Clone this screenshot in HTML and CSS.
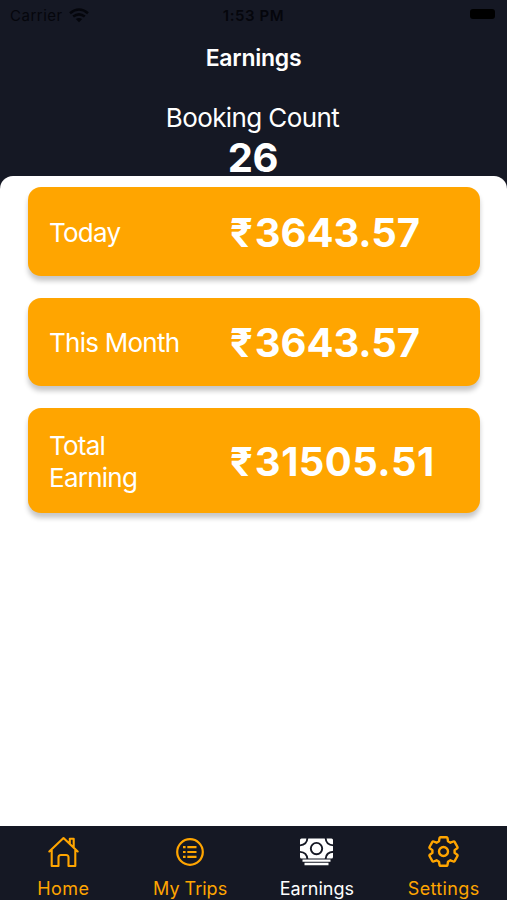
FILE: index.html
```html
<!DOCTYPE html>
<html lang="en">
<head>
<meta charset="utf-8">
<title>Earnings</title>
<link rel="stylesheet" href="styles.css">
</head>
<body>
<div class="status">
  <div class="carrier"><span>Carrier</span>
    <svg width="20" height="15" viewBox="0 0 20 15" fill="none" stroke="currentColor" stroke-width="2.6"><path d="M1 5.2Q10-2.2 19 5.2M4.2 8.6Q10 4 15.8 8.6"/><path d="M10 14.2 6.8 11Q10 8.8 13.2 11Z" fill="currentColor" stroke="none"/></svg>
  </div>
  <span class="time">1:53 PM</span>
  <div class="battery"><i></i></div>
</div>
<h1 class="title">Earnings</h1>
<div class="count-label"><span>Booking Count</span></div>
<div class="count">26</div>
<main class="sheet">
  <section class="card"><span class="label">Today</span><span class="amount">₹<b>3643.57</b></span></section>
  <section class="card"><span class="label">This Month</span><span class="amount">₹<b>3643.57</b></span></section>
  <section class="card tall"><span class="label">Total<br>Earning</span><span class="amount">₹<b>31505.51</b></span></section>
</main>
<nav class="tabs">
  <a class="tab home">
    <svg width="34" height="34" viewBox="-17.5 -17 34 34" fill="none" stroke="currentColor" stroke-width="2.1" stroke-linejoin="round" stroke-linecap="round"><path d="M-14.2-.5 0-14 14.2-.5M-11.8-2V14H-5V5.5Q-5 3-2.5 3H2.5Q5 3 5 5.5V14H11.8V-2M6.3-8.8V-13.2H10.2V-5"/></svg>
    <span>Home</span>
  </a>
  <a class="tab trips">
    <svg width="34" height="34" viewBox="-17 -17 34 34" fill="none" stroke="currentColor" stroke-width="2.2"><circle r="12.8"/><path d="M-2.7-4.8H6.5M-2.7 0H6.5M-2.7 4.8H6.5M-7-4.8H-4.4M-7 0H-4.4M-7 4.8H-4.4"/></svg>
    <span>My Trips</span>
  </a>
  <a class="tab active">
    <svg width="34" height="34" viewBox="-16 -17 34 34"><rect x="-16" y="-13.5" width="33" height="20" rx="1.5" fill="currentColor"/><g fill="none" stroke="#151824" stroke-width="1.9"><circle cx=".5" cy="-3.4" r="5.7"/><path d="M-8.6-14Q-9-7-16.5-6.6M9.6-14Q10-7 17.5-6.6M-16.5-.2Q-9 .2-8.6 7M17.5-.2Q10 .2 9.6 7"/></g><path d="M-13.5 8.6H14.5M-11.5 12H12.5" stroke="currentColor" stroke-width="2.3"/></svg>
    <span>Earnings</span>
  </a>
  <a class="tab settings">
    <svg width="34" height="34" viewBox="-16.5 -16.5 34 34" fill="none" stroke="currentColor" stroke-width="2.4" stroke-linejoin="round"><path d="M-3-14.3H3Q3.8-14.3 4-13.4L4.5-10.2 6.9-8.8 9.9-10Q10.7-10.3 11.1-9.6L14-4.5Q14.4-3.8 13.7-3.3L11.1-1.4V1.4L13.7 3.3Q14.4 3.8 14 4.5L11.1 9.6Q10.7 10.3 9.9 10L6.9 8.8 4.5 10.2 4 13.4Q3.8 14.3 3 14.3H-3Q-3.8 14.3-4 13.4L-4.5 10.2-6.9 8.8-9.9 10Q-10.7 10.3-11.1 9.6L-14 4.5Q-14.4 3.8-13.7 3.3L-11.1 1.4V-1.4L-13.7-3.3Q-14.4-3.8-14-4.5L-11.1-9.6Q-10.7-10.3-9.9-10L-6.9-8.8-4.5-10.2-4-13.4Q-3.8-14.3-3-14.3Z"/><circle r="4.5"/></svg>
    <span>Settings</span>
  </a>
</nav>
</body>
</html>
```
FILE: styles.css
```css
* { box-sizing: border-box; }
body {
  margin: 0;
  width: 507px;
  height: 900px;
  overflow: hidden;
  display: flex;
  flex-direction: column;
  background: #151824;
  color: #fff;
  font-family: Inter, "Noto Sans", sans-serif;
}
.status {
  height: 30px;
  display: grid;
  grid-template-columns: 1fr auto 1fr;
  align-items: center;
  padding: 0 12px 0 12px;
  color: #05060c;
  font-size: 15px;
}
.carrier { display: flex; align-items: center; gap: 6px; letter-spacing: .5px; margin-left: -2px; }
.time { font-weight: 600; letter-spacing: .6px; }
.battery { display: flex; justify-content: flex-end; }
.battery i { width: 25px; height: 10px; border-radius: 3px; background: #000; margin-bottom: 2px; }
.title { margin: 0; height: 56px; line-height: 56px; text-align: center; font-size: 23px; font-weight: 600; letter-spacing: -.25px; }
.count-label { height: 64px; line-height: 64px; text-align: center; font-size: 26px; font-weight: 400; letter-spacing: -.6px; padding-right: 2px; }
.count { height: 26px; line-height: 16px; text-align: center; font-size: 40px; font-weight: 700; letter-spacing: -.3px; padding-right: 1px; }
.sheet {
  flex: 1;
  background: #fff;
  border-radius: 13px 13px 0 0;
  padding: 11px 27px 0 28px;
  display: flex;
  flex-direction: column;
  gap: 22px;
}
.card {
  height: 88.5px;
  background: #ffa500;
  border-radius: 13px;
  box-shadow: 0 5px 5px rgba(0, 0, 0, .22);
  display: grid;
  grid-template-columns: 181px 1fr;
  align-items: center;
  padding: 2.5px 21px 0;
}
.card.tall { height: 105px; padding-top: 2px; }
.label { font-size: 26px; line-height: 32px; font-weight: 400; letter-spacing: -.75px; }
.amount { font-size: 40px; font-weight: 700; line-height: 48px; white-space: nowrap; }
.amount b { font-weight: 700; letter-spacing: -.1px; margin-left: 2px; }
.tall .amount b { letter-spacing: .45px; }
.tabs {
  height: 74px;
  display: grid;
  grid-template-columns: repeat(4, 1fr);
  background: #151824;
  color: #ffa500;
}
.tab { display: flex; flex-direction: column; align-items: center; padding-top: 9px; }
.tab span { font-size: 18px; line-height: 22px; margin-top: 9px; }
.tab.home span { letter-spacing: .4px; }
.tab.settings span { letter-spacing: .35px; }
.tab.active { color: #fff; }
```
